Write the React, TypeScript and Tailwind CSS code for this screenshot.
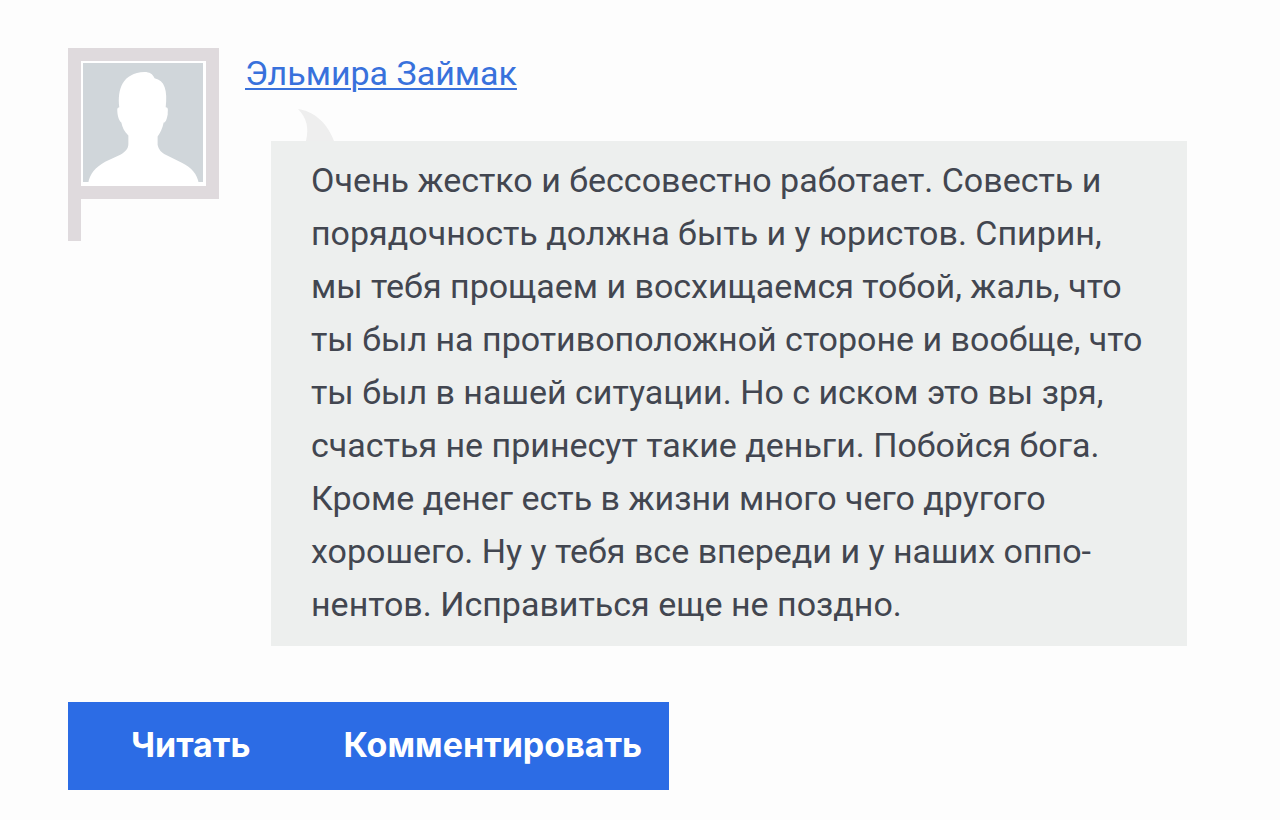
import type { ReactNode } from "react";

const REVIEW =
  "Очень жестко и бессовестно работает. Совесть и порядочность должна быть и у юристов. Спирин, мы тебя прощаем и восхищаемся тобой, жаль, что ты был на противоположной стороне и вообще, что ты был в нашей ситуации. Но с иском это вы зря, счастья не принесут такие деньги. Побойся бога. Кроме денег есть в жизни много чего другого хорошего. Ну у тебя все впереди и у наших оппо\u00ADнентов. Исправиться еще не поздно.";

function Avatar() {
  return (
    <div className="w-[151px] shrink-0">
      <div className="border-[13px] border-[#dfdadd] bg-white p-0.5">
        <svg viewBox="0 0 120 120" className="block w-full" role="img" aria-label="Аватар">
          <rect width="119" height="118" fill="#d0d6da" />
          <path
            d="M5 120C7 109 12 104 22 98L37 91C42 88 45 85 45 80V72C41 68 39 64 38 59C35 56 34 51 34 46C34 45 35 44 36 44C34 26 39 10 61 9C66 9 69 11 71 15C81 17 84 27 82 44C85 44 84 47 84 51C83 56 82 59 80 59C79 65 76 70 74 73V81C75 86 78 89 82 91L98 99C108 104 113 110 115 120Z"
            fill="#fff"
          />
        </svg>
      </div>
      <div className="h-[42px] w-[13px] bg-[#dfdadd]" />
    </div>
  );
}

function ActionButton({ className, children }: { className: string; children: ReactNode }) {
  return (
    <button type="button" className={`h-[88px] cursor-pointer bg-[#2c6ce5] pb-1 hover:bg-[#255fce] ${className}`}>
      {children}
    </button>
  );
}

export default function App() {
  return (
    <main className="min-h-screen bg-[#fdfdfd] pt-12 pr-[93px] pb-7 pl-[68px] font-['Roboto','Liberation_Sans',sans-serif]">
      <article className="flex items-start gap-[26px]">
        <Avatar />
        <div className="min-w-0 flex-1">
          <a href="#author" className="block w-fit text-[34px] leading-[50px] text-[#3871dc] underline decoration-2 underline-offset-3">
            Эльмира Займак
          </a>
          <div className="mt-[11px] ml-[26px]">
            <svg viewBox="0 0 36 32" className="ml-[27px] block h-8 w-9" aria-hidden="true">
              <path d="M0 0C15 2 29 13 36 32H8C11 19 9 9 0 0Z" fill="#eeeeee" />
            </svg>
            <p className="bg-[#edefee] px-10 pt-[13px] pb-[15px] text-[34px] leading-[53px] text-[#424650]">{REVIEW}</p>
          </div>
        </div>
      </article>
      <div className="mt-14 flex font-['Inter','Liberation_Sans',sans-serif] text-[34px] font-bold text-white">
        <ActionButton className="pr-[47px] pl-[63px]">Читать</ActionButton>
        <ActionButton className="pr-[27px] pl-[46px]">Комментировать</ActionButton>
      </div>
    </main>
  );
}
